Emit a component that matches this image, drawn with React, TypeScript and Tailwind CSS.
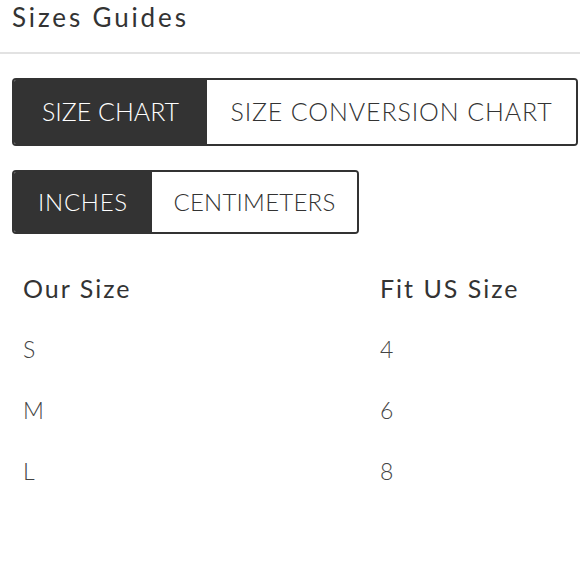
import React, { useState } from 'react';

const rows = [
  { ours: 'S', us: '4' },
  { ours: 'M', us: '6' },
  { ours: 'L', us: '8' },
];

export default function App() {
  const [chart, setChart] = useState<'size' | 'conversion'>('size');
  const [unit, setUnit] = useState<'in' | 'cm'>('in');

  const seg = (active: boolean) =>
    active ? 'bg-[#333333] text-white' : 'bg-white text-[#333333]';

  return (
    <div className="w-[580px] h-[580px] bg-white text-[#333333] font-['Lato',sans-serif]">
      {/* Header */}
      <div className="h-[54px] border-b-2 border-[#e2e2e2] px-3 pt-[2px]">
        <h1 className="text-[26px] leading-[30px] tracking-[0.11em]">Sizes Guides</h1>
      </div>

      <div className="px-3 pt-6">
        {/* Chart toggle */}
        <div className="flex h-[68px] w-[566px] border-2 border-[#333333] rounded-[4px] overflow-hidden">
          <button
            onClick={() => setChart('size')}
            className={`w-[193px] text-[25px] font-light ${seg(chart === 'size')}`}
          >
            SIZE CHART
          </button>
          <button
            onClick={() => setChart('conversion')}
            className={`flex-1 text-[25px] font-light tracking-[0.035em] ${seg(chart === 'conversion')}`}
          >
            SIZE CONVERSION CHART
          </button>
        </div>

        {/* Unit toggle */}
        <div className="mt-6 flex h-[64px] w-[347px] border-2 border-[#333333] rounded-[4px] overflow-hidden">
          <button
            onClick={() => setUnit('in')}
            className={`w-[138px] text-[24px] font-light tracking-[0.03em] ${seg(unit === 'in')}`}
          >
            INCHES
          </button>
          <button
            onClick={() => setUnit('cm')}
            className={`flex-1 text-[24px] font-light tracking-[0.01em] ${seg(unit === 'cm')}`}
          >
            CENTIMETERS
          </button>
        </div>

        {/* Table */}
        <div className="mt-6 pl-[11px]">
          <div className="grid grid-cols-[357px_1fr] h-[61px] items-center text-[25px] tracking-[0.08em]">
            <span>Our Size</span>
            <span>Fit US Size</span>
          </div>
          {rows.map((r) => (
            <div
              key={r.ours}
              className="grid grid-cols-[357px_1fr] h-[61px] items-center text-[23px] font-light text-[#444444]"
            >
              <span>{r.ours}</span>
              <span>{r.us}</span>
            </div>
          ))}
        </div>
      </div>
    </div>
  );
}
